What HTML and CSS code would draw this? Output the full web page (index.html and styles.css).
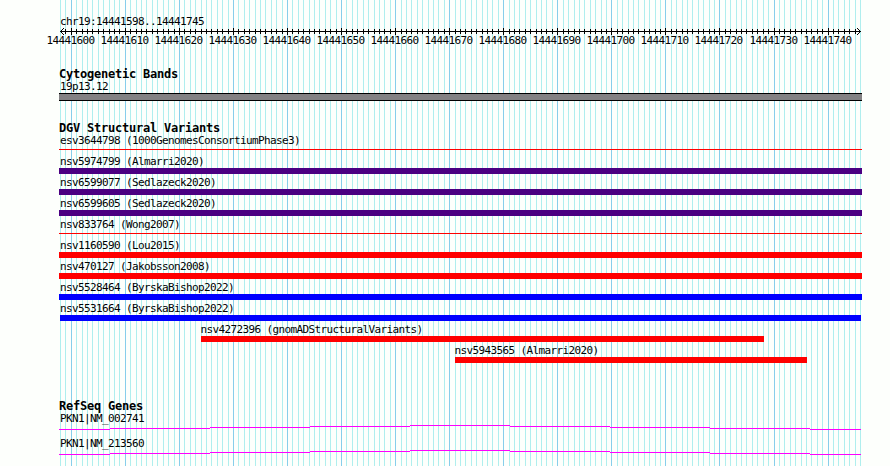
FILE: index.html
```
<!DOCTYPE html>
<html lang="en">
<head>
  <meta charset="UTF-8">
  <title>chr19:14441598..14441745</title>
  <link rel="stylesheet" href="styles.css">
</head>
<body>

<div class="browser">
  <svg class="grid" id="grid" width="890" height="466"></svg>

  <div class="region">chr19:14441598..14441745</div>
  <svg class="ruler" id="ruler" width="890" height="24"></svg>

  <div class="track cytoband">
    <h2>Cytogenetic Bands</h2>
    <div class="label">19p13.12</div>
    <div class="band"></div>
  </div>

  <div class="track variants">
    <h2>DGV Structural Variants</h2>
    <div class="feature">
      <div class="label">esv3644798 (1000GenomesConsortiumPhase3)</div>
      <div class="bar thin"></div>
    </div>
    <div class="feature">
      <div class="label">nsv5974799 (Almarri2020)</div>
      <div class="bar purple"></div>
    </div>
    <div class="feature">
      <div class="label">nsv6599077 (Sedlazeck2020)</div>
      <div class="bar purple"></div>
    </div>
    <div class="feature">
      <div class="label">nsv6599605 (Sedlazeck2020)</div>
      <div class="bar purple"></div>
    </div>
    <div class="feature">
      <div class="label">nsv833764 (Wong2007)</div>
      <div class="bar thin"></div>
    </div>
    <div class="feature">
      <div class="label">nsv1160590 (Lou2015)</div>
      <div class="bar red"></div>
    </div>
    <div class="feature">
      <div class="label">nsv470127 (Jakobsson2008)</div>
      <div class="bar red"></div>
    </div>
    <div class="feature">
      <div class="label">nsv5528464 (ByrskaBishop2022)</div>
      <div class="bar blue"></div>
    </div>
    <div class="feature">
      <div class="label">nsv5531664 (ByrskaBishop2022)</div>
      <div class="bar blue inset"></div>
    </div>
    <div class="feature gnomad">
      <div class="label">nsv4272396 (gnomADStructuralVariants)</div>
      <div class="bar red"></div>
    </div>
    <div class="feature almarri">
      <div class="label">nsv5943565 (Almarri2020)</div>
      <div class="bar red"></div>
    </div>
  </div>

  <div class="track genes">
    <h2>RefSeq Genes</h2>
    <div class="gene">
      <div class="label">PKN1|NM_002741</div>
      <svg class="intron" width="803" height="8"></svg>
    </div>
    <div class="gene">
      <div class="label">PKN1|NM_213560</div>
      <svg class="intron" width="803" height="8"></svg>
    </div>
  </div>
</div>

<script src="script.js"></script>
</body>
</html>
```
FILE: styles.css
```
body {
  margin: 0;
  background: #fdfffc;
  color: #000;
  font-family: "DejaVu Sans Mono", monospace;
  overflow: hidden;
}

.browser {
  position: relative;
  width: 890px;
  height: 466px;
  overflow: hidden;
}

svg {
  display: block;
}

.grid {
  position: absolute;
  top: 0;
  left: 0;
  z-index: -1;
}

.minor {
  fill: #afeeee;
}

.major {
  fill: #87ceeb;
}

.region,
.label,
.ruler text {
  font-size: 11px;
  letter-spacing: -0.623px;
}

.region {
  padding: 16px 0 0 60px;
  height: 9px;
  line-height: 12px;
  white-space: pre;
}

.ruler path {
  fill: none;
  stroke: #000;
}

.track {
  width: 803px;
  margin-left: 59px;
}

h2 {
  margin: 0;
  height: 13px;
  font-size: 12px;
  line-height: 13px;
  letter-spacing: -0.225px;
}

.label {
  height: 12px;
  padding-left: 1px;
  line-height: 12px;
  white-space: pre;
}

.cytoband {
  padding-top: 19px;
}

.band {
  box-sizing: border-box;
  height: 8px;
  background: #838183;
  border-top: 1px solid #000;
  border-bottom: 1px solid #000;
}

.variants {
  padding-top: 21px;
}

.feature {
  height: 21px;
}

.gnomad {
  width: 563px;
  margin-left: 142px;
}

.almarri {
  width: 352px;
  margin-left: 396px;
}

.gnomad .label,
.almarri .label {
  padding-left: 0;
  margin-left: -0.5px;
}

.bar {
  height: 6px;
}

.thin {
  height: 1px;
  margin-top: 2px;
  background: #f00;
}

.purple {
  background: #4b0082;
}

.red {
  background: #f00;
}

.blue {
  background: #00f;
}

.inset {
  margin: 0 1px;
}

.genes {
  padding-top: 34px;
}

.gene {
  height: 25px;
}

.intron rect {
  fill: #f0f;
}
```
FILE: script.js
```
const start = 14441598;
const end = 14441745;
const left = 60;
const scale = 800 / (end - start + 1);

let lines = '';
let ticks = '';
let numbers = '';

for (let pos = start; pos <= end + 1; pos++) {
  const x = left + Math.round((pos - start) * scale);
  const major = pos % 10 === 0;
  lines += `<rect class="${major ? 'major' : 'minor'}" x="${x}" y="0" width="1" height="466"/>`;
  if (pos > start && pos <= end) {
    ticks += major ? `M${x + 0.5} 3v7` : `M${x + 0.5} 4v5`;
  }
  if (major) {
    numbers += `<text x="${x - 24.5}" y="19">${pos}</text>`;
  }
}

document.getElementById('grid').innerHTML = lines;
document.getElementById('ruler').innerHTML =
  `<path d="M60 6.5H861${ticks}"/>` +
  '<path d="M64 3L60.5 6.5L64 10M857 3L860.5 6.5L857 10"/>' + numbers;

// intron line rises one pixel per step up to the middle, then falls
const edges = [0, 51, 151, 251, 351, 451, 551, 651, 751, 802];
const heights = [4, 3, 2, 1, 0, 1, 2, 3, 4];
const steps = heights.map((y, i) =>
  `<rect x="${edges[i]}" y="${y}" width="${edges[i + 1] - edges[i]}" height="1"/>`
).join('');

document.querySelectorAll('.intron').forEach(svg => {
  svg.innerHTML = steps;
});
```
